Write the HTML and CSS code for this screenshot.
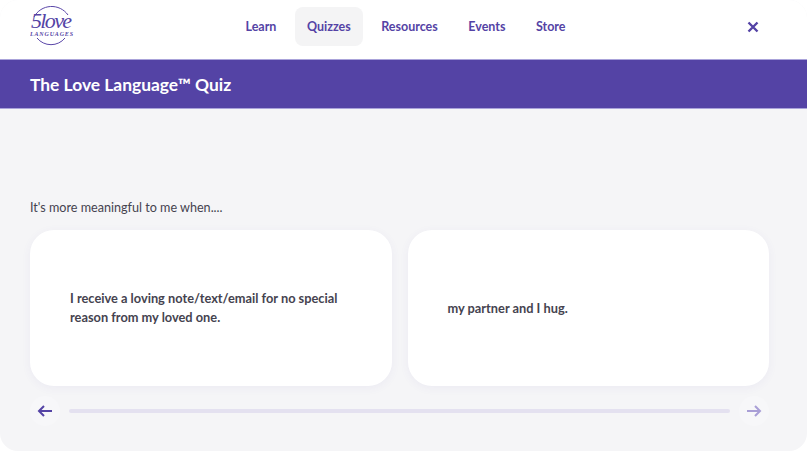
FILE: index.html
```html
<!DOCTYPE html>
<html lang="en">
<head>
    <meta charset="utf-8">
    <title>The Love Language Quiz</title>
    <link rel="stylesheet" href="styles.css">
</head>
<body>
<div class="page">
    <header class="top">
        <svg class="logo" width="44" height="42" viewBox="0 0 44 42">
            <path d="M4 11 A20 20 0 0 1 38 9" fill="none" stroke="#5a46a8" stroke-width="1"/>
            <text class="logo-big" x="1" y="22" textLength="41" lengthAdjust="spacing">5love</text>
            <text class="logo-small" x="0" y="29.5" textLength="43" lengthAdjust="spacing">LANGUAGES</text>
            <path d="M7 32 A18 18 0 0 0 35 32" fill="none" stroke="#5a46a8" stroke-width="1"/>
        </svg>
        <nav class="nav">
            <a class="nav-item">Learn</a>
            <a class="nav-item active">Quizzes</a>
            <a class="nav-item">Resources</a>
            <a class="nav-item">Events</a>
            <a class="nav-item">Store</a>
        </nav>
        <svg class="close" width="12" height="12" viewBox="0 0 12 12">
            <path d="M1.5 1.5 L10.5 10.5 M10.5 1.5 L1.5 10.5" stroke="#5443a5" stroke-width="2.4"/>
        </svg>
    </header>
    <div class="banner">The Love Language™ Quiz</div>
    <main class="quiz">
        <p class="question">It's more meaningful to me when....</p>
        <div class="cards">
            <div class="card">I receive a loving note/text/email for no special reason from my loved one.</div>
            <div class="card">my partner and I hug.</div>
        </div>
        <div class="progress">
            <button class="arrow">
                <svg width="16" height="12" viewBox="0 0 16 12">
                    <path d="M15 6 H2 M7 1 L2 6 L7 11" fill="none" stroke="#5443a5" stroke-width="2"/>
                </svg>
            </button>
            <div class="track"></div>
            <button class="arrow">
                <svg width="16" height="12" viewBox="0 0 16 12">
                    <path d="M1 6 H14 M9 1 L14 6 L9 11" fill="none" stroke="#a99fd6" stroke-width="2"/>
                </svg>
            </button>
        </div>
    </main>
</div>
</body>
</html>
```
FILE: styles.css
```css
*{margin: 0;padding: 0;box-sizing: border-box;}
html,body{height: 100%;background: #fff;}
body{font-family: "Lato", "Liberation Sans", sans-serif;overflow: hidden;}
.page{height: 451px;display: flex;flex-direction: column;background: #f5f5f7;border-radius: 18px;overflow: hidden;}
.top{height: 60px;flex: none;display: flex;align-items: center;background: #fff;border-bottom: 1px solid #aaa3da;padding: 0 48px 6px 30px;}
.logo{flex: none;}
.logo-big{font-family: "Liberation Serif", serif;font-style: italic;font-size: 22px;fill: #5443a5;}
.logo-small{font-family: "Liberation Serif", serif;font-style: italic;font-weight: bold;font-size: 6px;fill: #5443a5;}
.nav{flex: 1;display: flex;align-items: center;justify-content: center;gap: 6.5px;margin-left: -10px;}
.nav-item{height: 39px;padding: 0 12px;display: flex;align-items: center;border-radius: 8px;font-size: 12.5px;font-weight: 700;color: #5443a5;}
.nav-item.active{background: #f4f4f5;}
.close{flex: none;}
.banner{height: 49px;flex: none;display: flex;align-items: center;padding-left: 30px;background: #5443a5;color: #fff;font-size: 17.4px;font-weight: 700;border-bottom: 1px solid #aaa3da;}
.quiz{flex: 1;display: flex;flex-direction: column;justify-content: flex-end;padding: 0 38px 21px 30px;}
.question{font-size: 12.6px;line-height: 16px;color: #45434f;margin-bottom: 14px;}
.cards{display: flex;gap: 16px;margin-bottom: 6px;}
.card{flex: 1;height: 156px;display: flex;align-items: center;padding: 0 40px;background: #fff;border-radius: 24px;box-shadow: 0 2px 10px rgba(84,67,165,0.06);font-size: 12.8px;font-weight: 700;line-height: 19px;color: #45434f;}
.progress{display: flex;align-items: center;height: 38px;}
.arrow{width: 30px;height: 30px;border: none;border-radius: 50%;background: #f7f7f9;display: flex;align-items: center;justify-content: center;flex: none;}
.track{flex: 1;height: 4px;margin: 0 9px;background: #e4e1f0;border-radius: 2px;}
```
